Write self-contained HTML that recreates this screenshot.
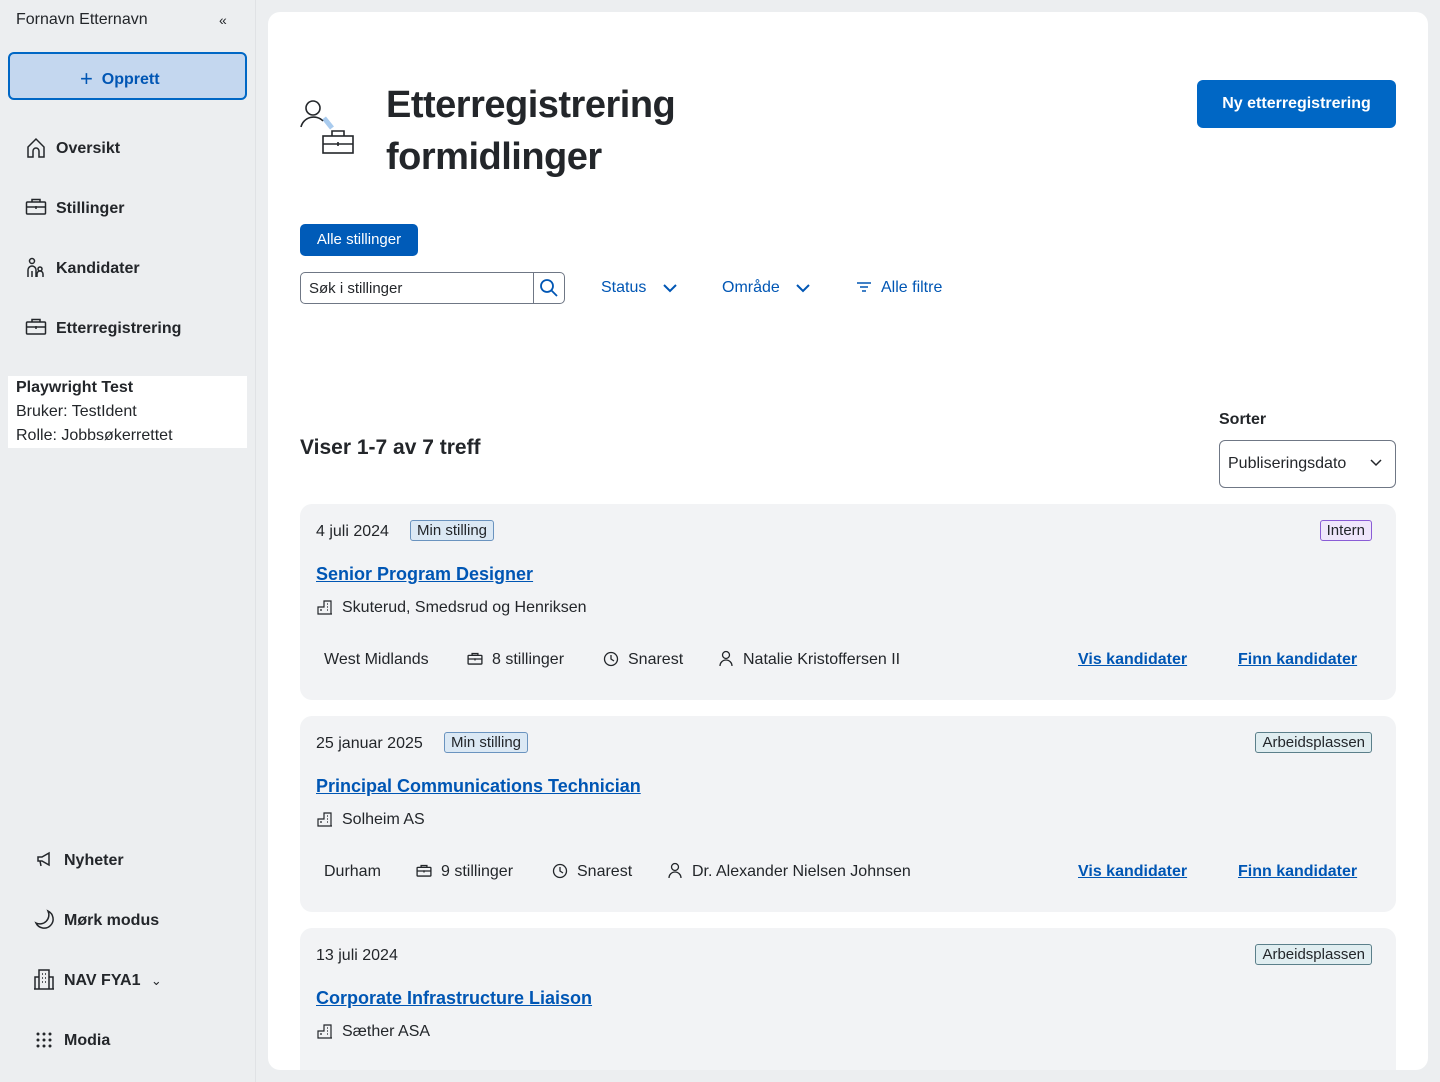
<!DOCTYPE html>
<html><head><meta charset="utf-8"><style>
*{box-sizing:border-box;margin:0;padding:0}
body{width:1440px;height:1082px;overflow:hidden;background:#eceef0;font-family:"Liberation Sans",sans-serif;color:#23262a;position:relative}
.a{position:absolute;white-space:nowrap}
.side{position:absolute;left:0;top:0;width:256px;height:1082px;background:#eceef0;border-right:1px solid #e0e2e5}
.nav{font-weight:bold;font-size:16px;color:#23262a;margin-top:2px}
.main{position:absolute;left:268px;top:12px;width:1160px;height:1058px;background:#fff;border-radius:12px}
.card{position:absolute;left:300px;width:1096px;height:196px;background:#f2f3f5;border-radius:12px}
.tag{position:absolute;font-size:15px;padding:1px 6px;border:1px solid #6a93bf;background:#dbe8f4;border-radius:3px;color:#23262a}
.lnk{color:#0056b4;text-decoration:underline;font-weight:bold;margin-top:2px}
.c{font-size:16px;color:#23262a;margin-top:2px}
svg{position:absolute}
</style></head><body>
<div class="side">
<div class="a" style="left:16px;top:11px;font-size:16px">Fornavn Etternavn</div>
<div class="a" style="left:219px;top:12px;font-size:14px">«</div>
<div class="a" style="left:8px;top:52px;width:239px;height:48px;background:#c4d7ef;border:2px solid #0067c5;border-radius:6px"></div>
<div class="a" style="left:80px;top:64px;font-size:16px;font-weight:bold;color:#0056b4"><span style="font-weight:normal;font-size:22px;position:relative;top:2px">+</span>&nbsp; Opprett</div>
<svg style="left:26px;top:137px" width="20" height="22" viewBox="0 0 20 22" fill="none" stroke="#23262a" stroke-width="1.5"><path d="M2 10L10 2l8 8v10h-5v-6a3 3 0 0 0-6 0v6H2z"/></svg>
<div class="a nav" style="left:56px;top:138px">Oversikt</div>
<svg style="left:25px;top:198px" width="22" height="18" viewBox="0 0 22 18" fill="none" stroke="#23262a" stroke-width="1.5"><rect x="1.5" y="4" width="19" height="12" rx="1"/><path d="M7 4V1.5h8V4M1.5 9h19M11 8v3"/></svg>
<div class="a nav" style="left:56px;top:198px">Stillinger</div>
<svg style="left:26px;top:257px" width="22" height="22" viewBox="0 0 22 22" fill="none" stroke="#23262a" stroke-width="1.5"><circle cx="6" cy="4" r="2.5"/><path d="M2 20v-7a4 4 0 0 1 8 0v7M6 14v6"/><circle cx="14" cy="12" r="2"/><path d="M11 20v-3a3 3 0 0 1 6 0v3"/></svg>
<div class="a nav" style="left:56px;top:258px">Kandidater</div>
<svg style="left:25px;top:318px" width="22" height="18" viewBox="0 0 22 18" fill="none" stroke="#23262a" stroke-width="1.5"><rect x="1.5" y="4" width="19" height="12" rx="1"/><path d="M7 4V1.5h8V4M1.5 9h19M11 8v3"/></svg>
<div class="a nav" style="left:56px;top:318px">Etterregistrering</div>
<div class="a" style="left:8px;top:376px;width:239px;height:72px;background:#fff"></div>
<div class="a" style="left:16px;top:376px;font-size:16px;line-height:24px"><b>Playwright Test</b><br>Bruker: TestIdent<br>Rolle: Jobbsøkerrettet</div>
<svg style="left:36px;top:851px" width="16" height="16" viewBox="0 0 16 16" fill="none" stroke="#23262a" stroke-width="1.5"><path d="M2 6h4l7-4v12L6 10H2zM4 10l1 5"/></svg>
<div class="a nav" style="left:64px;top:850px">Nyheter</div>
<svg style="left:34px;top:909px" width="22" height="22" viewBox="0 0 22 22" fill="none" stroke="#23262a" stroke-width="1.5"><path d="M14 2a9 9 0 1 1-12 12A9 9 0 0 0 14 2z"/></svg>
<div class="a nav" style="left:64px;top:910px">Mørk modus</div>
<svg style="left:34px;top:968px" width="20" height="22" viewBox="0 0 20 22" fill="none" stroke="#23262a" stroke-width="1.5"><path d="M5 21V2h10v19M1 21V9h4M15 9h4v12M0 21h20M8 6h1M11 6h1M8 10h1M11 10h1M8 14h1M11 14h1"/></svg>
<div class="a nav" style="left:64px;top:970px">NAV FYA1 <span style="font-weight:normal;font-size:13px;margin-left:6px">⌄</span></div>
<svg style="left:36px;top:1032px" width="16" height="16" viewBox="0 0 16 16" fill="#23262a"><circle cx="2" cy="2" r="1.5"/><circle cx="8" cy="2" r="1.5"/><circle cx="14" cy="2" r="1.5"/><circle cx="2" cy="8" r="1.5"/><circle cx="8" cy="8" r="1.5"/><circle cx="14" cy="8" r="1.5"/><circle cx="2" cy="14" r="1.5"/><circle cx="8" cy="14" r="1.5"/><circle cx="14" cy="14" r="1.5"/></svg>
<div class="a nav" style="left:64px;top:1030px">Modia</div>
</div>
<div class="main"></div>
<svg style="left:298px;top:98px" width="58" height="58" viewBox="0 0 58 58" fill="none" stroke="#23262a" stroke-width="1.6"><path d="M26 20l8 10" stroke="#a9cbee" stroke-width="5"/><circle cx="15" cy="10" r="7"/><path d="M3 29a13 13 0 0 1 22-6"/><rect x="25" y="38" width="30" height="17"/><path d="M34 38v-5h12v5M25 46h30M40 44v4"/></svg>
<div class="a" style="left:386px;top:79px;font-size:38px;font-weight:bold;line-height:52px;letter-spacing:-0.5px">Etterregistrering<br>formidlinger</div>
<div class="a" style="left:1197px;top:80px;width:199px;height:48px;background:#0067c5;border-radius:6px;color:#fff;font-weight:bold;font-size:16px;text-align:center;line-height:48px">Ny etterregistrering</div>
<div class="a" style="left:300px;top:224px;width:118px;height:32px;background:#005bb8;border-radius:5px;color:#fff;font-size:15px;text-align:center;line-height:32px">Alle stillinger</div>
<div class="a" style="left:300px;top:272px;width:265px;height:32px;border:1px solid #6f7785;border-radius:5px"></div>
<div class="a" style="left:533px;top:272px;width:1px;height:32px;background:#6f7785"></div>
<div class="a" style="left:309px;top:280px;font-size:15px">Søk i stillinger</div>
<svg style="left:539px;top:278px" width="20" height="20" viewBox="0 0 20 20" fill="none" stroke="#0056b4" stroke-width="1.8"><circle cx="8" cy="8" r="6"/><path d="M12.5 12.5L18 18"/></svg>
<div class="a" style="left:601px;top:279px;font-size:16px;color:#0056b4">Status</div>
<svg style="left:662px;top:282px" width="16" height="12" viewBox="0 0 16 12" fill="none" stroke="#0056b4" stroke-width="2"><path d="M2 3l6 6 6-6"/></svg>
<div class="a" style="left:722px;top:279px;font-size:16px;color:#0056b4">Område</div>
<svg style="left:795px;top:282px" width="16" height="12" viewBox="0 0 16 12" fill="none" stroke="#0056b4" stroke-width="2"><path d="M2 3l6 6 6-6"/></svg>
<svg style="left:856px;top:281px" width="16" height="12" viewBox="0 0 16 12" fill="none" stroke="#0056b4" stroke-width="1.5"><path d="M1 2h14M4 6h8M6 10h4"/></svg>
<div class="a" style="left:881px;top:279px;font-size:16px;color:#0056b4">Alle filtre</div>
<div class="a" style="left:300px;top:436px;font-size:21px;font-weight:bold">Viser 1-7 av 7 treff</div>
<div class="a" style="left:1219px;top:411px;font-size:16px;font-weight:bold">Sorter</div>
<div class="a" style="left:1219px;top:440px;width:177px;height:48px;border:1px solid #6f7785;border-radius:6px"></div>
<div class="a" style="left:1228px;top:455px;font-size:16px">Publiseringsdato</div>
<svg style="left:1369px;top:458px" width="14" height="10" viewBox="0 0 14 10" fill="none" stroke="#23262a" stroke-width="1.5"><path d="M2 2l5 5 5-5"/></svg>

<div class="card" style="top:504px"></div>
<div class="a c" style="left:316px;top:521px">4 juli 2024</div>
<div class="tag" style="left:410px;top:520px">Min stilling</div>
<div class="tag" style="right:68px;top:520px;border-color:#8a5cd6;background:#efe6fb">Intern</div>
<div class="a lnk" style="left:316px;top:562px;font-size:18px">Senior Program Designer</div>
<svg style="left:317px;top:599px" width="16" height="16" viewBox="0 0 16 16" fill="none" stroke="#23262a" stroke-width="1.2"><path d="M1 15V8h6V2h7v13zM1 15h14M10 5h1M10 8h1M10 11h1M3 11h2"/></svg>
<div class="a c" style="left:342px;top:597px">Skuterud, Smedsrud og Henriksen</div>
<div class="a c" style="left:324px;top:649px">West Midlands</div>
<svg style="left:467px;top:652px" width="16" height="14" viewBox="0 0 22 18" fill="none" stroke="#23262a" stroke-width="1.8"><rect x="1.5" y="4" width="19" height="12" rx="1"/><path d="M7 4V1.5h8V4M1.5 9h19M11 8v3"/></svg>
<div class="a c" style="left:492px;top:649px">8 stillinger</div>
<svg style="left:603px;top:651px" width="16" height="16" viewBox="0 0 16 16" fill="none" stroke="#23262a" stroke-width="1.3"><circle cx="8" cy="8" r="6.5"/><path d="M8 4v4l3 2"/></svg>
<div class="a c" style="left:628px;top:649px">Snarest</div>
<svg style="left:719px;top:650px" width="14" height="16" viewBox="0 0 14 16" fill="none" stroke="#23262a" stroke-width="1.3"><circle cx="7" cy="5" r="3.5"/><path d="M1 16a6 6 0 0 1 12 0"/></svg>
<div class="a c" style="left:743px;top:649px">Natalie Kristoffersen II</div>
<div class="a lnk c" style="left:1078px;top:649px;color:#0056b4">Vis kandidater</div>
<div class="a lnk c" style="left:1238px;top:649px;color:#0056b4">Finn kandidater</div>

<div class="card" style="top:716px"></div>
<div class="a c" style="left:316px;top:733px">25 januar 2025</div>
<div class="tag" style="left:444px;top:732px">Min stilling</div>
<div class="tag" style="right:68px;top:732px;background:#e0edf0;border-color:#5b7f8a">Arbeidsplassen</div>
<div class="a lnk" style="left:316px;top:774px;font-size:18px">Principal Communications Technician</div>
<svg style="left:317px;top:811px" width="16" height="16" viewBox="0 0 16 16" fill="none" stroke="#23262a" stroke-width="1.2"><path d="M1 15V8h6V2h7v13zM1 15h14M10 5h1M10 8h1M10 11h1M3 11h2"/></svg>
<div class="a c" style="left:342px;top:809px">Solheim AS</div>
<div class="a c" style="left:324px;top:861px">Durham</div>
<svg style="left:416px;top:864px" width="16" height="14" viewBox="0 0 22 18" fill="none" stroke="#23262a" stroke-width="1.8"><rect x="1.5" y="4" width="19" height="12" rx="1"/><path d="M7 4V1.5h8V4M1.5 9h19M11 8v3"/></svg>
<div class="a c" style="left:441px;top:861px">9 stillinger</div>
<svg style="left:552px;top:863px" width="16" height="16" viewBox="0 0 16 16" fill="none" stroke="#23262a" stroke-width="1.3"><circle cx="8" cy="8" r="6.5"/><path d="M8 4v4l3 2"/></svg>
<div class="a c" style="left:577px;top:861px">Snarest</div>
<svg style="left:668px;top:862px" width="14" height="16" viewBox="0 0 14 16" fill="none" stroke="#23262a" stroke-width="1.3"><circle cx="7" cy="5" r="3.5"/><path d="M1 16a6 6 0 0 1 12 0"/></svg>
<div class="a c" style="left:692px;top:861px">Dr. Alexander Nielsen Johnsen</div>
<div class="a lnk c" style="left:1078px;top:861px;color:#0056b4">Vis kandidater</div>
<div class="a lnk c" style="left:1238px;top:861px;color:#0056b4">Finn kandidater</div>

<div class="card" style="top:928px;height:142px;border-radius:12px 12px 0 0"></div>
<div class="a c" style="left:316px;top:945px">13 juli 2024</div>
<div class="tag" style="right:68px;top:944px;background:#e0edf0;border-color:#5b7f8a">Arbeidsplassen</div>
<div class="a lnk" style="left:316px;top:986px;font-size:18px">Corporate Infrastructure Liaison</div>
<svg style="left:317px;top:1023px" width="16" height="16" viewBox="0 0 16 16" fill="none" stroke="#23262a" stroke-width="1.2"><path d="M1 15V8h6V2h7v13zM1 15h14M10 5h1M10 8h1M10 11h1M3 11h2"/></svg>
<div class="a c" style="left:342px;top:1021px">Sæther ASA</div>
</body></html>
